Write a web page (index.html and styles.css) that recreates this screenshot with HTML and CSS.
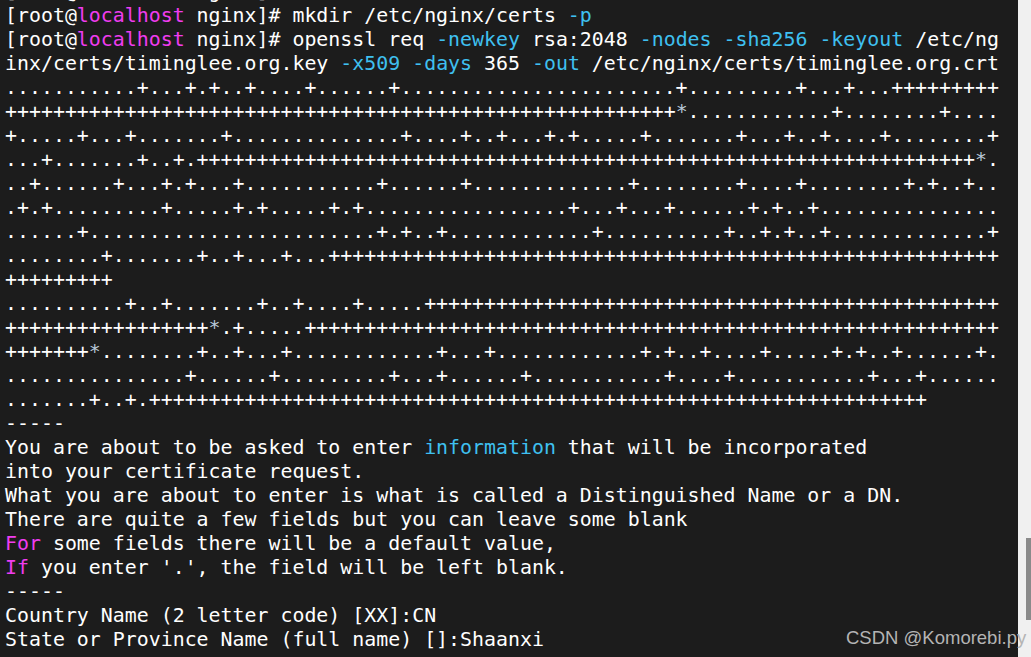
FILE: index.html
```html
<!DOCTYPE html>
<html>
<head>
<meta charset="utf-8">
<link rel="stylesheet" href="styles.css">
</head>
<body>
<div class="window">
<div class="terminal">
<pre class="screen">[root@<span class="mag">localhost</span> nginx]# ls
[root@<span class="mag">localhost</span> nginx]# mkdir /etc/nginx/certs <span class="cyan">-p</span>
[root@<span class="mag">localhost</span> nginx]# openssl req <span class="cyan">-newkey</span> rsa:2048 <span class="cyan">-nodes</span> <span class="cyan">-sha256</span> <span class="cyan">-keyout</span> /etc/ng
inx/certs/timinglee.org.key <span class="cyan">-x509</span> <span class="cyan">-days</span> 365 <span class="cyan">-out</span> /etc/nginx/certs/timinglee.org.crt
...........+...+.+..+....+......+.......................+.........+...+...+++++++++
++++++++++++++++++++++++++++++++++++++++++++++++++++++++<span class="star">*</span>............+........+....
+.....+...+.......+..............+....+..+...+.+.....+.......+...+..+....+........+
...+.......+..+.+++++++++++++++++++++++++++++++++++++++++++++++++++++++++++++++++<span class="star">*</span>.
..+......+...+.+...+...........+......+.............+........+....+........+.+..+..
.+.+.........+.....+.+.....+.+.................+...+...+......+.+..+...............
......+........................+.+..+............+..........+..+.+..+.............+
........+.......+..+...+...++++++++++++++++++++++++++++++++++++++++++++++++++++++++
+++++++++
..........+..+.......+..+....+.....++++++++++++++++++++++++++++++++++++++++++++++++
+++++++++++++++++<span class="star">*</span>.+.....++++++++++++++++++++++++++++++++++++++++++++++++++++++++++
+++++++<span class="star">*</span>........+..+...+............+...+............+.+..+....+.....+.+..+......+.
...............+......+.........+...+......+...........+....+...........+...+......
.......+..+.+++++++++++++++++++++++++++++++++++++++++++++++++++++++++++++++++
-----
You are about to be asked to enter <span class="cyan">information</span> that will be incorporated
into your certificate request.
What you are about to enter is what is called a Distinguished Name or a DN.
There are quite a few fields but you can leave some blank
<span class="mag">For</span> some fields there will be a default value,
<span class="mag">If</span> you enter '.', the field will be left blank.
-----
Country Name (2 letter code) [XX]:CN
State or Province Name (full name) []:Shaanxi
</pre>
</div>
<div class="scrollbar"><div class="thumb"></div></div>
</div>
<div class="watermark">CSDN @Komorebi.py</div>
</body>
</html>
```
FILE: styles.css
```css
html, body {
  margin: 0;
  padding: 0;
  width: 1031px;
  height: 657px;
  overflow: hidden;
  background: #1c1c1c;
}

.window {
  display: flex;
  width: 1031px;
  height: 657px;
}

.terminal {
  flex: 1;
  background: #1c1c1c;
  overflow: hidden;
}

.screen {
  margin: -20px 0 0 0;
  padding: 0 0 0 5px;
  font-family: "DejaVu Sans Mono", monospace;
  font-size: 19.9px;
  line-height: 24px;
  color: #ffffff;
  white-space: pre;
}

.mag {
  color: #f03cf0;
}

.cyan {
  color: #3fc0f0;
}

.star {
  color: #b8c8d8;
}

.scrollbar {
  width: 13px;
  background: #f0f0f0;
  position: relative;
}

.thumb {
  position: absolute;
  left: 8px;
  right: 0;
  top: 538px;
  height: 82px;
  background: #8a8a8a;
}

.watermark {
  position: absolute;
  left: 846px;
  top: 626px;
  font-family: "Liberation Sans", Arial, sans-serif;
  font-size: 18.5px;
  line-height: 24px;
  color: #b4b4b4;
  white-space: nowrap;
}
```
